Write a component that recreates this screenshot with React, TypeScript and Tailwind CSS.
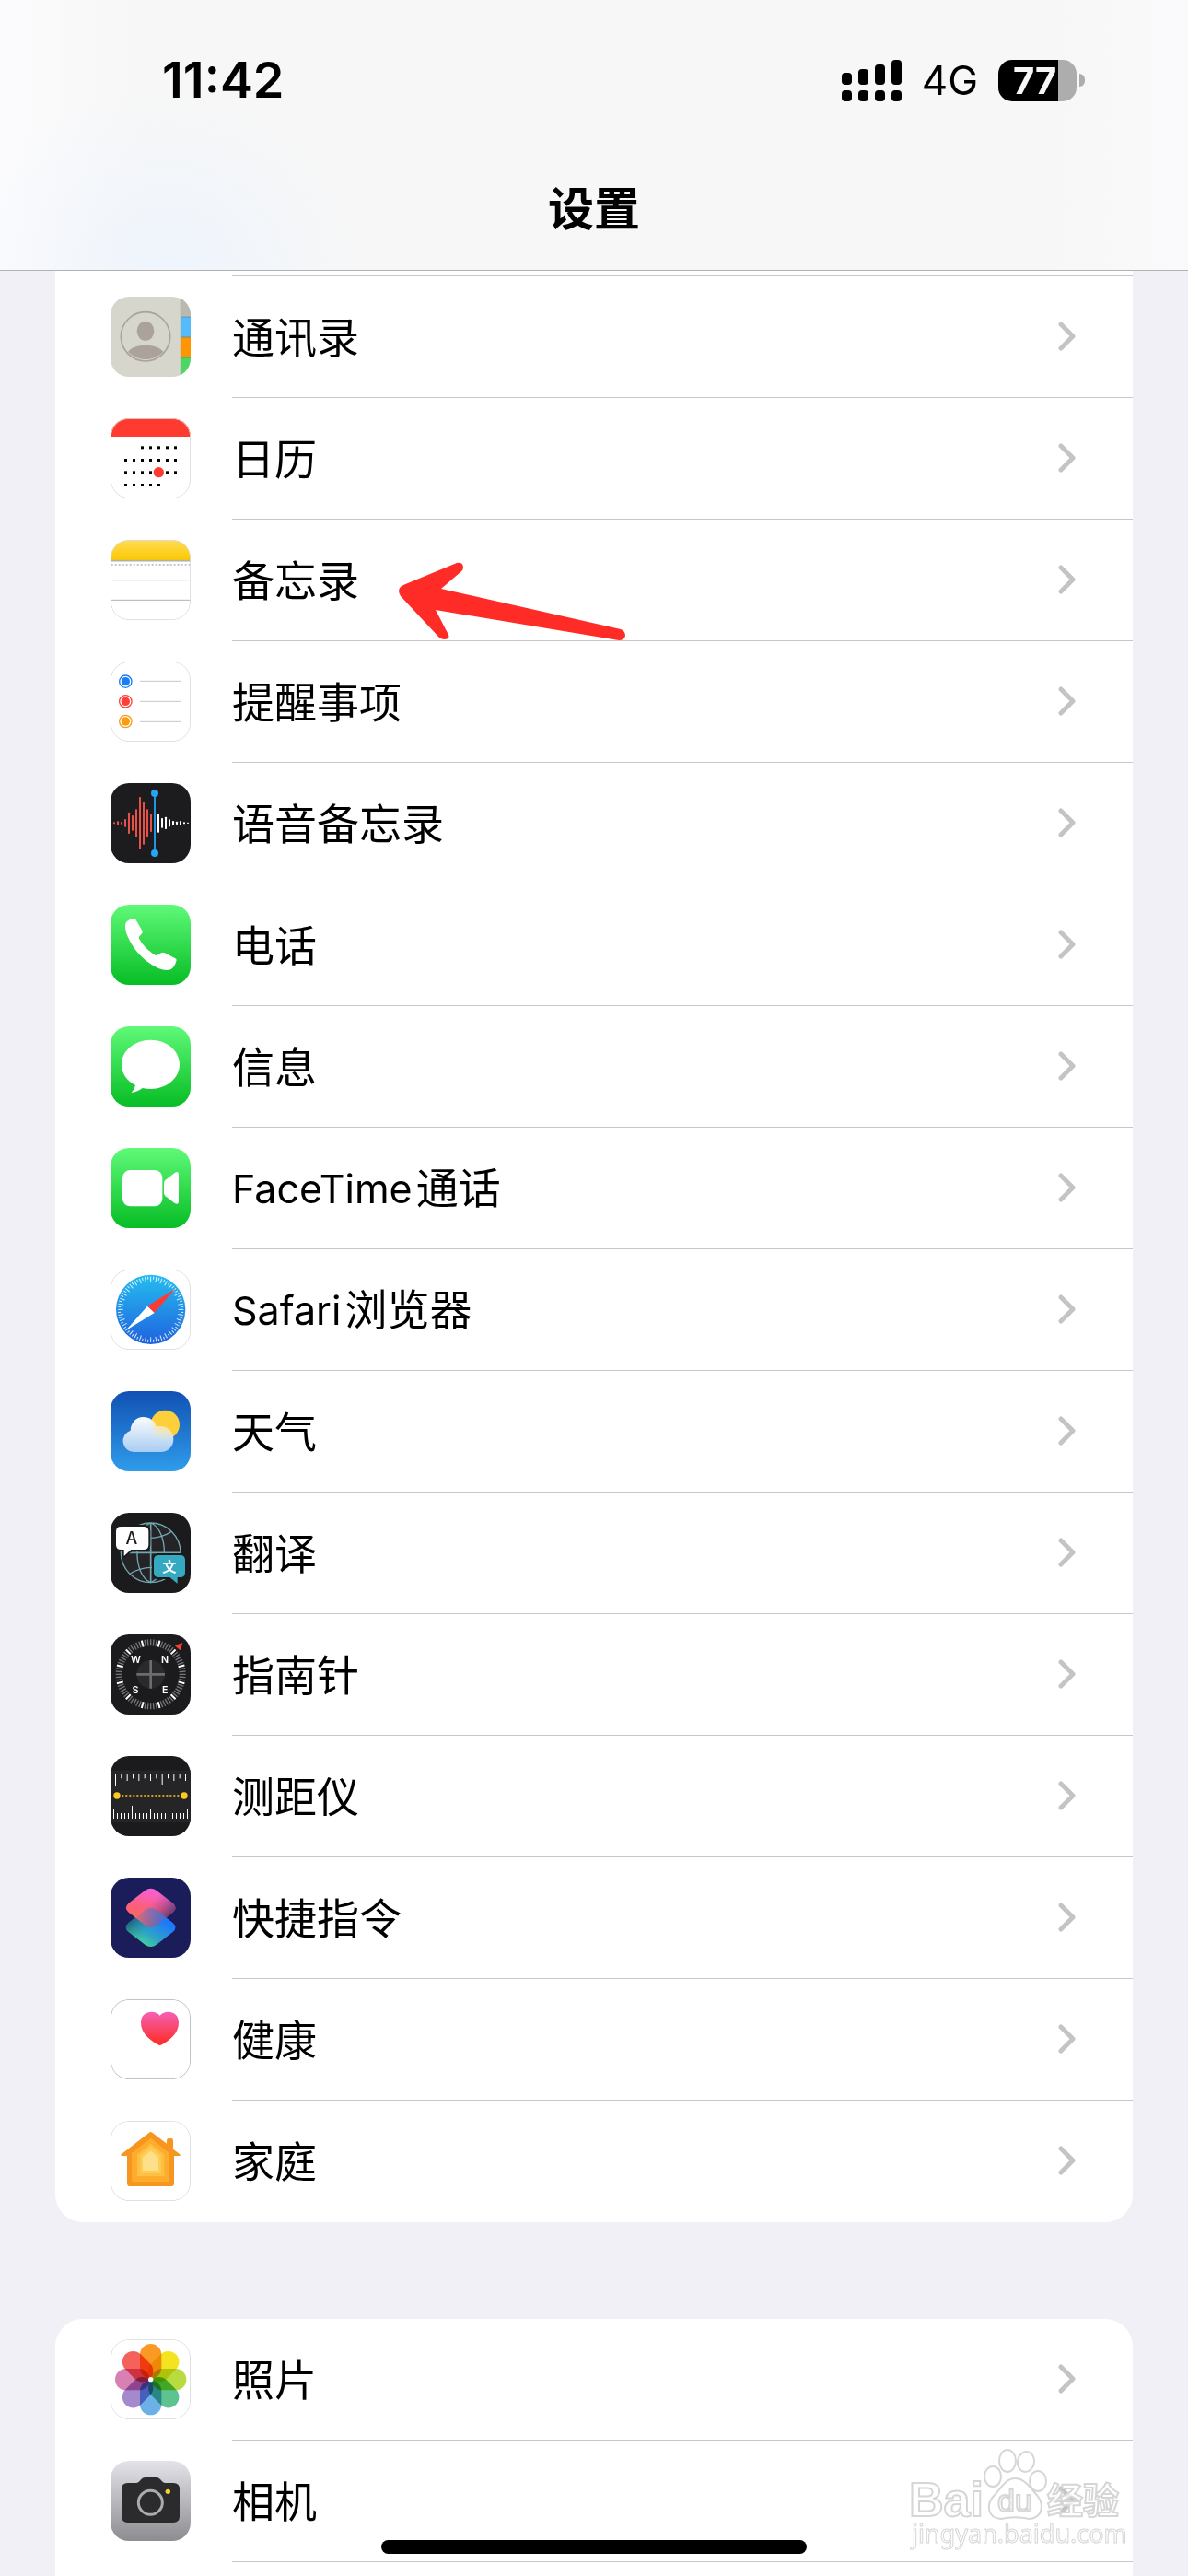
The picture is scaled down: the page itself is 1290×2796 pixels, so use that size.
import type { ReactNode } from 'react';
import { clsx } from 'clsx';

type App = {
  latin?: string;
  name: string;
  icon: ReactNode;
  edge?: 'light' | 'dark';
};

const spread = (count: number) => Array.from({ length: count }, (_, i) => i);

function Gradient({ id, from, to }: { id: string; from: string; to: string }) {
  return (
    <linearGradient id={id} x1="0" y1="0" x2="0" y2="1">
      <stop offset="0" stopColor={from} />
      <stop offset="1" stopColor={to} />
    </linearGradient>
  );
}

function ContactsIcon() {
  return (
    <>
      <rect width="261" height="261" fill="#d6d6cc" />
      <rect x="228" width="33" height="66" fill="#bab9b1" />
      <rect x="228" y="66" width="33" height="66" fill="#55bbfb" />
      <rect x="228" y="132" width="33" height="66" fill="#ff9500" />
      <rect x="228" y="198" width="33" height="63" fill="#4cd663" />
      <path d="M228 66h33M228 132h33M228 198h33" stroke="#000" strokeOpacity="0.2" strokeWidth="3" />
      <path d="M229 0v261" stroke="#8e8d86" strokeWidth="3" />
      <circle cx="114" cy="130" r="80" fill="none" stroke="#aaa29b" strokeWidth="5" />
      <ellipse cx="114" cy="112" rx="28" ry="32" fill="#aaa29b" />
      <path d="M57 180C78 151 150 151 172 180A80 80 0 0 1 57 180Z" fill="#aaa29b" />
    </>
  );
}

const calendarRows = [
  { y: 95, first: 2, last: 6 },
  { y: 136, first: 0, last: 6 },
  { y: 176, first: 0, last: 6 },
  { y: 217, first: 0, last: 4 },
];

function CalendarIcon() {
  return (
    <>
      <rect width="261" height="60" fill="#ff3b30" />
      {calendarRows.map((row) =>
        spread(row.last - row.first + 1).map((i) => (
          <rect key={`${row.y}-${i}`} x={45 + (row.first + i) * 27} y={row.y - 4} width="9" height="9" />
        )),
      )}
      <circle cx="157" cy="176" r="17" fill="#ff3b30" />
    </>
  );
}

function NotesIcon() {
  return (
    <>
      <defs>
        <Gradient id="notes" from="#fedc55" to="#fdc800" />
      </defs>
      <rect width="261" height="66" fill="url(#notes)" />
      <path d="M0 68h261" stroke="#b4b0a4" strokeWidth="5" />
      <path d="M2 81h259" stroke="#b5b5b8" strokeWidth="5" strokeDasharray="6 6" />
      <path d="M0 131h261M0 196h261" stroke="#b2b2b4" strokeWidth="3" />
    </>
  );
}

function RemindersIcon() {
  return (
    <>
      {['#1a7df5', '#fc3f38', '#fb9b12'].map((color, i) => (
        <g key={color}>
          <circle cx="49" cy={65 + i * 65} r="20" fill="none" stroke={color} strokeWidth="4" />
          <circle cx="49" cy={65 + i * 65} r="14" fill={color} />
          <path d={`M96 ${64 + i * 66}h133`} stroke="#c8c8ca" strokeWidth="3" />
        </g>
      ))}
    </>
  );
}

const recorded = [6, 12, 8, 26, 70, 50, 90, 170, 140, 90, 58];
const upcoming = [62, 32, 40, 24, 14, 10, 14, 6, 4];

function VoiceMemosIcon() {
  return (
    <>
      <rect width="261" height="261" fill="#1c1c1e" />
      {recorded.map((h, i) => (
        <rect key={i} x={9 + i * 12} y={130 - h / 2} width="6" height={h} rx="2" fill="#e8504a" />
      ))}
      {upcoming.map((h, i) => (
        <rect key={i} x={153 + i * 12} y={130 - h / 2} width="6" height={h} rx="2" fill="#fff" />
      ))}
      <path d="M144 33v195" stroke="#2196e6" strokeWidth="6" />
      <circle cx="144" cy="33" r="12" fill="#25a5f2" />
      <circle cx="144" cy="228" r="12" fill="#25a5f2" />
    </>
  );
}

function GreenTile({ id, children }: { id: string; children: ReactNode }) {
  return (
    <>
      <defs>
        <Gradient id={id} from="#5ff978" to="#07bd25" />
      </defs>
      <rect width="261" height="261" fill={`url(#${id})`} />
      {children}
    </>
  );
}

function PhoneIcon() {
  return (
    <GreenTile id="phone">
      <path
        d="M82 48 103 84Q106 90 101 95L94 103Q91 107 94 112C105 132 124 152 146 164Q150 166 154 163L165 157Q171 154 177 157L211 175Q217 178 214 184C211 196 205 206 196 211C176 217 154 208 134 195C108 178 84 154 67 125C54 103 45 80 49 62C51 54 61 48 72 45Q79 43 82 48Z"
        fill="#fff"
      />
    </GreenTile>
  );
}

function MessagesIcon() {
  return (
    <GreenTile id="messages">
      <path
        d="M131 44C183 44 225 79 225 124S183 204 131 204Q117 204 104 201C94 209 82 214 68 216Q79 205 81 192C53 178 36 153 36 124C36 79 79 44 131 44Z"
        fill="#fff"
      />
    </GreenTile>
  );
}

function FaceTimeIcon() {
  return (
    <GreenTile id="facetime">
      <rect x="39" y="72" width="130" height="118" rx="25" fill="#fff" />
      <path d="M174 114Q174 108 179 104L209 81Q222 73 222 86V174Q222 187 209 180L179 157Q174 153 174 147Z" fill="#fff" />
    </GreenTile>
  );
}

function SafariIcon() {
  return (
    <>
      <defs>
        <Gradient id="safari" from="#25bdf0" to="#1f62de" />
      </defs>
      <circle cx="131" cy="130" r="113" fill="url(#safari)" />
      {spread(72).map((i) => (
        <path
          key={i}
          d={i % 2 ? 'M131 23v9' : 'M131 23v17'}
          stroke="#fff"
          strokeOpacity="0.85"
          strokeWidth="3"
          transform={`rotate(${i * 5} 131 130)`}
        />
      ))}
      <path d="M211 62 143 141 120 119Z" fill="#fc3b33" />
      <path d="M50 198 120 119 143 141Z" fill="#fff" />
    </>
  );
}

function WeatherIcon() {
  return (
    <>
      <defs>
        <Gradient id="sky" from="#1151b3" to="#2f9ceb" />
        <linearGradient id="cloud" gradientUnits="userSpaceOnUse" x1="0" y1="84" x2="0" y2="198">
          <stop offset="0" stopColor="#fbfcff" />
          <stop offset="1" stopColor="#a9cdf2" />
        </linearGradient>
        <radialGradient id="glow" gradientUnits="userSpaceOnUse" cx="176" cy="108" r="54">
          <stop offset="0" stopColor="#fde07d" stopOpacity="0.95" />
          <stop offset="1" stopColor="#fde79f" stopOpacity="0" />
        </radialGradient>
        <path
          id="cloud-shape"
          d="M75 198A36 36 0 0 1 65 128C66 102 84 84 107 84C127 84 143 96 149 115C182 108 205 130 205 157C205 181 187 198 164 198Z"
        />
      </defs>
      <rect width="261" height="261" fill="url(#sky)" />
      <circle cx="178" cy="109" r="47" fill="#fdd03b" />
      <use href="#cloud-shape" fill="url(#cloud)" />
      <use href="#cloud-shape" fill="url(#glow)" />
    </>
  );
}

function TranslateIcon() {
  return (
    <>
      <rect width="261" height="261" fill="#1b1b1d" />
      <g fill="none" stroke="#72a5b0" strokeWidth="4">
        <circle cx="131" cy="130" r="97" fill="#242426" />
        <path d="M131 33v194M34 130h194" strokeWidth="5" />
        <path d="M131 33C190 55 190 205 131 227C72 205 72 55 131 33Z" />
        <path d="M64 62Q131 102 198 62M64 198Q131 158 198 198" />
      </g>
      <path
        d="M34 42H108Q127 42 127 61V104Q127 123 108 123H68L46 143Q41 146 41 139V123H34Q15 123 15 104V61Q15 42 34 42Z"
        fill="#fff"
        stroke="#1b1b1d"
        strokeWidth="6"
      />
      <path
        d="M157 135H227Q246 135 246 154V194Q246 213 227 213H221V228Q220 235 214 231L192 213H157Q138 213 138 194V154Q138 135 157 135Z"
        fill="#35a9c1"
        stroke="#1b1b1d"
        strokeWidth="6"
      />
      <text x="69" y="102" textAnchor="middle" className="fill-[#1b1b1d] font-['Inter'] text-[54px] font-medium">
        A
      </text>
      <text x="192" y="191" textAnchor="middle" className="fill-white font-['Noto_Sans_CJK_SC'] text-[46px] font-bold">
        文
      </text>
    </>
  );
}

const compassPoints = [
  { label: 'W', x: 82, y: 93 },
  { label: 'N', x: 177, y: 93 },
  { label: 'S', x: 81, y: 192 },
  { label: 'E', x: 178, y: 192 },
];

function CompassIcon() {
  return (
    <>
      <rect width="261" height="261" fill="#1b1b1d" />
      {spread(72).map((i) => (
        <path
          key={i}
          d="M131 16v21"
          stroke={i % 6 === 3 ? '#fff' : '#77777b'}
          strokeWidth={i % 6 === 3 ? 6 : 4}
          transform={`rotate(${i * 5} 131 130)`}
        />
      ))}
      <circle cx="131" cy="130" r="46" fill="#2a2a2c" />
      <path d="M131 84v92M85 130h92" stroke="#6c6c6f" strokeWidth="8" />
      <path d="M235 27 209 36 227 52Z" fill="#fc3b33" />
      {compassPoints.map((p) => (
        <text key={p.label} x={p.x} y={p.y} textAnchor="middle" className="fill-white font-['Inter'] text-[32px] font-semibold">
          {p.label}
        </text>
      ))}
    </>
  );
}

const upperTicks = [42, 16, 24, 16, 24, 16, 24, 16, 36, 16, 24, 16, 24];

function MeasureIcon() {
  return (
    <>
      <rect width="261" height="261" fill="#1b1b1d" />
      <rect y="46" width="261" height="170" fill="#252527" />
      {upperTicks.map((h, i) => (
        <rect key={i} x={15 + i * 19} y="57" width="3" height={h} fill="#fff" />
      ))}
      {spread(21).map((i) => {
        const h = i % 10 === 5 ? 42 : i % 5 === 0 ? 30 : 18;
        return <rect key={i} x={9 + i * 12} y={204 - h} width="3" height={h} fill="#fff" />;
      })}
      <path d="M37 129h190" stroke="#fccb22" strokeWidth="5" strokeDasharray="6 6" />
      <circle cx="21" cy="129" r="11" fill="#fccb22" />
      <circle cx="240" cy="129" r="11" fill="#fccb22" />
    </>
  );
}

function ShortcutsIcon() {
  return (
    <>
      <defs>
        <linearGradient id="lower" x1="0.35" y1="1" x2="0.85" y2="0.4">
          <stop offset="0" stopColor="#45d898" />
          <stop offset="0.4" stopColor="#2fa5c4" />
          <stop offset="1" stopColor="#1d78fd" />
        </linearGradient>
        <linearGradient id="lower-shade" x1="0" y1="0.3" x2="0.45" y2="0.65">
          <stop offset="0" stopColor="#1b4a6c" />
          <stop offset="1" stopColor="#2e9c9c" stopOpacity="0" />
        </linearGradient>
        <linearGradient id="upper" x1="0.6" y1="0" x2="0.3" y2="0.9">
          <stop offset="0" stopColor="#f75fe0" />
          <stop offset="0.6" stopColor="#fb5f78" />
          <stop offset="1" stopColor="#fb6a55" />
        </linearGradient>
        <linearGradient id="upper-shade" x1="1" y1="0.7" x2="0.5" y2="0.35">
          <stop offset="0" stopColor="#3c3274" />
          <stop offset="1" stopColor="#b04890" stopOpacity="0" />
        </linearGradient>
        <linearGradient id="overlap-fill" x1="0.2" y1="0.6" x2="0.8" y2="0.5">
          <stop offset="0" stopColor="#c86a80" stopOpacity="0.5" />
          <stop offset="1" stopColor="#3b78e0" stopOpacity="0.85" />
        </linearGradient>
        <path
          id="tile"
          d="M112 42Q131 28 150 42L203 83Q220 98 203 113L150 154Q131 168 112 154L59 113Q42 98 59 83Z"
        />
        <clipPath id="overlap">
          <use href="#tile" />
        </clipPath>
      </defs>
      <rect width="261" height="261" fill="#1b1d5b" />
      <use href="#tile" y="64" fill="url(#lower)" />
      <use href="#tile" y="64" fill="url(#lower-shade)" />
      <use href="#tile" fill="url(#upper)" />
      <use href="#tile" fill="url(#upper-shade)" />
      <g clipPath="url(#overlap)">
        <use href="#tile" y="64" fill="url(#overlap-fill)" />
      </g>
    </>
  );
}

function HealthIcon() {
  return (
    <>
      <defs>
        <Gradient id="heart" from="#f461b4" to="#ff2a20" />
      </defs>
      <path
        d="M161 54C151 36 99 32 99 77C99 111 130 134 155 148Q161 152 167 148C192 134 222 111 222 77C222 32 171 36 161 54Z"
        fill="url(#heart)"
      />
    </>
  );
}

function HomeIcon() {
  return (
    <>
      <path
        d="M126 38Q131 34 136 38L183 74V64Q183 57 190 57H197Q204 57 204 64V92L226 109Q230 114 224 114H207V203Q207 213 197 213H64Q54 213 54 203V114H36Q31 113 35 109Z"
        fill="#f6951f"
      />
      <path d="M131 56 192 105V192Q192 198 186 198H75Q69 198 69 192V105Z" fill="#fdac2b" />
      <path d="M131 74 175 110V180H87V110Z" fill="#fec043" />
      <path d="M131 84 164 112V171H98V112Z" fill="#fecd57" />
      <path d="M131 98 156 118V162H105V118Z" fill="#ffe08a" />
    </>
  );
}

const petals = ['#f99a25', '#f4e31f', '#b8db40', '#5dc391', '#6cb0e8', '#a589cd', '#d880b4', '#f5625c'];

function PhotosIcon() {
  return (
    <>
      {petals.map((color, i) => (
        <rect
          key={color}
          x="96"
          y="15"
          width="70"
          height="113"
          rx="35"
          fill={color}
          className="mix-blend-multiply"
          transform={`rotate(${i * 45} 131 131)`}
        />
      ))}
      <circle cx="131" cy="131" r="8" fill="#fff" />
    </>
  );
}

function CameraIcon() {
  return (
    <>
      <defs>
        <Gradient id="camera" from="#e4e3e9" to="#8d8c91" />
      </defs>
      <rect width="261" height="261" fill="url(#camera)" />
      <path
        d="M56 72H84Q90 72 94 67L100 60Q105 54 113 54H149Q157 54 162 60L168 67Q172 72 178 72H205Q225 72 225 92V181Q225 201 205 201H56Q36 201 36 181V92Q36 72 56 72Z"
        fill="#2b2b2d"
      />
      <circle cx="130" cy="136" r="39" fill="none" stroke="#ababad" strokeWidth="9" />
      <circle cx="187" cy="100" r="8" fill="#fbd02c" />
    </>
  );
}

const systemApps: App[] = [
  { name: '通讯录', icon: <ContactsIcon /> },
  { name: '日历', icon: <CalendarIcon />, edge: 'light' },
  { name: '备忘录', icon: <NotesIcon />, edge: 'light' },
  { name: '提醒事项', icon: <RemindersIcon />, edge: 'light' },
  { name: '语音备忘录', icon: <VoiceMemosIcon /> },
  { name: '电话', icon: <PhoneIcon /> },
  { name: '信息', icon: <MessagesIcon /> },
  { latin: 'FaceTime', name: '通话', icon: <FaceTimeIcon /> },
  { latin: 'Safari', name: '浏览器', icon: <SafariIcon />, edge: 'light' },
  { name: '天气', icon: <WeatherIcon /> },
  { name: '翻译', icon: <TranslateIcon /> },
  { name: '指南针', icon: <CompassIcon /> },
  { name: '测距仪', icon: <MeasureIcon /> },
  { name: '快捷指令', icon: <ShortcutsIcon /> },
  { name: '健康', icon: <HealthIcon />, edge: 'dark' },
  { name: '家庭', icon: <HomeIcon />, edge: 'light' },
];

const mediaApps: App[] = [
  { name: '照片', icon: <PhotosIcon />, edge: 'light' },
  { name: '相机', icon: <CameraIcon /> },
];

function AppRow({ app, divider, children }: { app: App; divider: boolean; children?: ReactNode }) {
  return (
    <li className="relative">
      <a href="#" className="flex gap-[45px] pl-15">
        <svg viewBox="0 0 261 261" className="mt-[22px] size-[87px] shrink-0 rounded-[20px]" aria-hidden="true">
          {app.icon}
          {app.edge && (
            <rect
              x="1"
              y="1"
              width="259"
              height="259"
              rx="59"
              fill="none"
              stroke={app.edge === 'dark' ? '#b8b8ba' : '#dcdcde'}
              strokeWidth="3"
            />
          )}
        </svg>
        <div
          className={clsx(
            'flex h-33 flex-1 items-center justify-between border-b pr-[61px]',
            divider ? 'border-[#c6c6c9]' : 'border-transparent',
          )}
        >
          <span className="text-[46px] leading-[54px]">
            {app.latin && <span className="mr-1 text-[43px]">{app.latin}</span>}
            {app.name}
          </span>
          <svg viewBox="0 0 21 34" className="h-[34px] w-[21px]" fill="none" aria-hidden="true">
            <path d="M4 3 17 16 4 29" stroke="#c4c4c6" strokeWidth="5" strokeLinecap="round" strokeLinejoin="round" />
          </svg>
        </div>
      </a>
      {children}
    </li>
  );
}

function StatusBar() {
  return (
    <div className="flex items-center justify-between pt-15 pr-28 pl-44">
      <time className="text-[54px] leading-[54px] font-semibold">11:42</time>
      <div className="flex items-center gap-[22px]">
        <svg viewBox="0 0 65 45" className="h-[45px] w-[65px]" aria-label="信号">
          {[13, 17, 22, 27].map((h, i) => (
            <g key={h}>
              <rect x={i * 18} y={27 - h} width="11" height={h} rx="4" />
              <rect x={i * 18} y="33" width="11" height="12" rx="4" />
            </g>
          ))}
        </svg>
        <span className="text-[44px] leading-[54px]">4G</span>
        <div className="flex items-center gap-[3px]">
          <div className="h-[45px] w-[85px] rounded-[15px] bg-[linear-gradient(to_right,#000_65px,#adadad_65px)] pl-4">
            <span className="block text-[40px] leading-[45px] font-bold text-[#f7f7f8]">77</span>
          </div>
          <div className="h-[14px] w-[6px] rounded-r-full bg-[#adadad]" />
        </div>
      </div>
    </div>
  );
}

function Arrow() {
  return (
    <svg viewBox="0 0 246 86" className="absolute top-[46px] left-[373px] h-[86px] w-[246px]" aria-hidden="true">
      <path
        d="M5 25 63 1Q70 0 70 6Q70 9 67 11L46 29 241 73Q246 75 246 80Q245 85 239 85L40 52 54 79Q56 84 49 84Q47 84 44 82L2 37Q-3 29 5 25Z"
        fill="#ff2b26"
      />
    </svg>
  );
}

function Watermark() {
  return (
    <svg
      viewBox="0 0 240 120"
      className="pointer-events-none absolute right-[66px] bottom-[22px] h-[120px] w-[240px]"
      fill="#fff"
      stroke="#d6d6d6"
      strokeWidth="2"
      aria-hidden="true"
    >
      <text x="3" y="77" className="font-['Liberation_Sans'] text-[52px] font-bold">
        Bai
      </text>
      <ellipse cx="94" cy="34" rx="9" ry="11" />
      <ellipse cx="110" cy="17" rx="9" ry="12" />
      <ellipse cx="130" cy="18" rx="9" ry="11" transform="rotate(10 130 18)" />
      <ellipse cx="143" cy="39" rx="9" ry="11" />
      <path d="M118 36C128 36 134 45 140 52C150 62 150 78 134 80C124 78 112 78 103 80C88 79 86 64 96 54C104 46 108 36 118 36Z" />
      <text x="99" y="72" className="font-['Liberation_Sans'] text-[34px]">
        du
      </text>
      <text x="153" y="74" fillOpacity="0.7" className="font-['Noto_Sans_CJK_SC'] text-[39px] font-bold">
        经验
      </text>
      <text x="6" y="106" strokeWidth="1" className="font-['Noto_Sans'] text-[27px]">
        jingyan.baidu.com
      </text>
    </svg>
  );
}

export default function SettingsPage() {
  return (
    <div className="relative flex min-h-screen flex-col overflow-hidden bg-[#f1f0f6] font-['Inter','Noto_Sans_CJK_SC',sans-serif] text-black">
      <header className="flex h-[294px] flex-col gap-[86px] border-b border-[#b2b2b5] bg-[#f7f7f7] bg-[radial-gradient(ellipse_220px_200px_at_14%_100%,#eff5fd,transparent),linear-gradient(to_right,#fbfbfd,transparent_12%,transparent_88%,#fafafc)]">
        <StatusBar />
        <h1 className="text-center text-[50px] leading-[54px] font-bold">设置</h1>
      </header>
      <main className="flex flex-1 flex-col gap-[105px] px-15">
        <section className="rounded-b-[30px] bg-white">
          <div className="ml-48 h-1.5 border-b border-[#c6c6c9]" />
          <ul>
            {systemApps.map((app, i) => (
              <AppRow key={app.name} app={app} divider={i < systemApps.length - 1}>
                {app.name === '备忘录' && <Arrow />}
              </AppRow>
            ))}
          </ul>
        </section>
        <section className="flex-1 rounded-t-[30px] bg-white">
          <ul>
            {mediaApps.map((app) => (
              <AppRow key={app.name} app={app} divider />
            ))}
          </ul>
        </section>
      </main>
      <Watermark />
      <div className="absolute inset-x-0 bottom-6 flex justify-center">
        <div className="h-[15px] w-[462px] rounded-full bg-black" />
      </div>
    </div>
  );
}
